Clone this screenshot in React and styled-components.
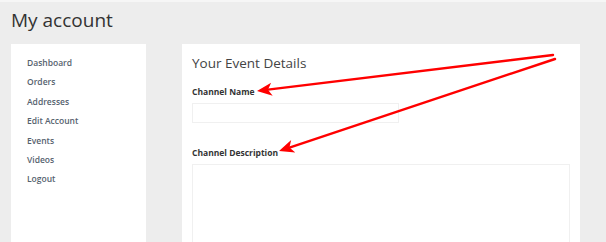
import React from "react";
import styled, {createGlobalStyle} from "styled-components";

const GlobalStyle = createGlobalStyle`
  html, body {
    margin: 0;
    padding: 0;
    background: #ededed;
    font-family: "Open Sans", "Liberation Sans", sans-serif;
  }
`;

const Page = styled.div`
  position: relative;
  width: 606px;
  height: 242px;
  overflow: hidden;
  border-top: 2px solid #f6f6f6;
  box-sizing: border-box;
`;

const PageTitle = styled.h1`
  margin: 0;
  padding: 6px 0 0 11px;
  height: 36px;
  font-size: 19px;
  font-weight: 400;
  color: #333;
  line-height: 24px;
`;

const Columns = styled.div`
  display: flex;
  gap: 36px;
  padding-left: 11px;
`;

const Sidebar = styled.nav`
  width: 135px;
  height: 200px;
  background: #fff;
  padding: 9px 0 0 16px;
  box-sizing: border-box;
  display: flex;
  flex-direction: column;
`;

const NavLink = styled.a`
  font-size: 8.5px;
  font-weight: 600;
  color: #56626e;
  line-height: 19.4px;
  text-decoration: none;
`;

const Main = styled.section`
  width: 398px;
  height: 200px;
  background: #fff;
  padding: 10px 10px 0 10px;
  box-sizing: border-box;
`;

const SectionTitle = styled.h2`
  margin: 0 0 14px;
  font-size: 13.5px;
  font-weight: 400;
  color: #444;
  line-height: 18px;
`;

const Label = styled.label`
  display: block;
  font-size: 8.5px;
  font-weight: 700;
  color: #333;
  line-height: 12px;
  margin-bottom: 5px;
`;

const Input = styled.div`
  width: 207px;
  height: 20px;
  border: 1px solid #f0f0f0;
  box-sizing: border-box;
  margin-bottom: 24px;
`;

const TextArea = styled.div`
  width: 378px;
  height: 90px;
  border: 1px solid #f0f0f0;
  box-sizing: border-box;
`;

const Overlay = styled.svg`
  position: absolute;
  left: 0;
  top: -2px;
  pointer-events: none;
`;

const Arrow = ({x1, y1, x2, y2}) => {
  const ang = Math.atan2(y2 - y1, x2 - x1);
  const len = 15;
  const w = 6.5;
  const bx = x2 - len * Math.cos(ang);
  const by = y2 - len * Math.sin(ang);
  const px = -Math.sin(ang) * w;
  const py = Math.cos(ang) * w;
  return (
    <g>
      <line x1={x1} y1={y1} x2={bx + 4 * Math.cos(ang)} y2={by + 4 * Math.sin(ang)} stroke="#ff0000" strokeWidth="2.4" strokeLinecap="round" />
      <polygon
        points={`${x2},${y2} ${bx + px},${by + py} ${bx + 4 * Math.cos(ang)},${by + 4 * Math.sin(ang)} ${bx - px},${by - py}`}
        fill="#ff0000"
      />
    </g>
  );
};

const navItems = ["Dashboard", "Orders", "Addresses", "Edit Account", "Events", "Videos", "Logout"];

export default function App() {
  return (
    <>
      <GlobalStyle />
      <Page>
        <PageTitle>My account</PageTitle>
        <Columns>
          <Sidebar>
            {navItems.map((item) => (
              <NavLink key={item} href="#">{item}</NavLink>
            ))}
          </Sidebar>
          <Main>
            <SectionTitle>Your Event Details</SectionTitle>
            <Label>Channel Name</Label>
            <Input />
            <Label>Channel Description</Label>
            <TextArea />
          </Main>
        </Columns>
        <Overlay width="606" height="242">
          <Arrow x1={553} y1={55} x2={257} y2={91} />
          <Arrow x1={555} y1={59} x2={279} y2={151} />
        </Overlay>
      </Page>
    </>
  );
}
